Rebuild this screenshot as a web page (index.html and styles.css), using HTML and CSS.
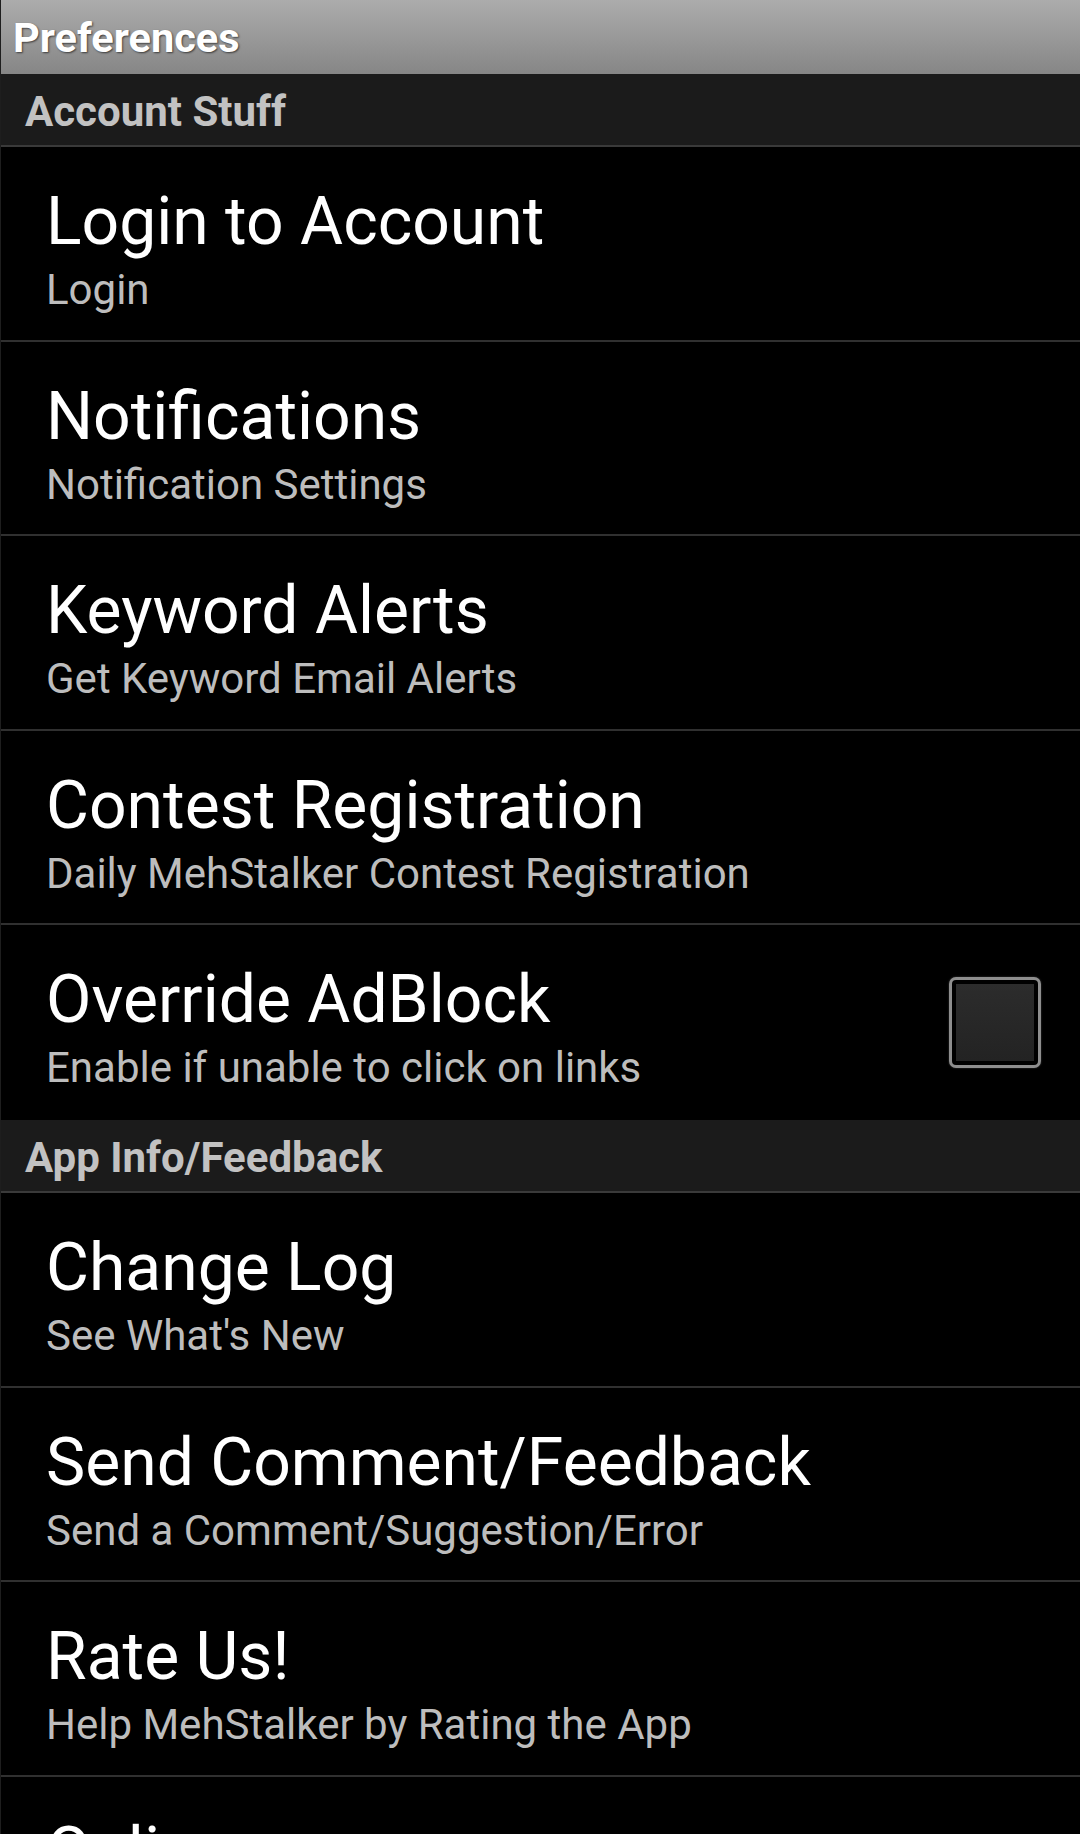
FILE: index.html
```html
<!DOCTYPE html>
<html lang="en">
<head>
    <meta charset="UTF-8">
    <meta name="viewport" content="width=device-width, initial-scale=1.0">
    <title>Preferences</title>
    <link rel="stylesheet" href="styles.css">
</head>
<body>
    <div class="titlebar">Preferences</div>

    <div class="category">Account Stuff</div>
    <div class="pref">
        <div class="pref-text">
            <div class="pref-title">Login to Account</div>
            <div class="pref-summary">Login</div>
        </div>
    </div>
    <div class="pref">
        <div class="pref-text">
            <div class="pref-title">Notifications</div>
            <div class="pref-summary">Notification Settings</div>
        </div>
    </div>
    <div class="pref">
        <div class="pref-text">
            <div class="pref-title">Keyword Alerts</div>
            <div class="pref-summary">Get Keyword Email Alerts</div>
        </div>
    </div>
    <div class="pref">
        <div class="pref-text">
            <div class="pref-title">Contest Registration</div>
            <div class="pref-summary">Daily MehStalker Contest Registration</div>
        </div>
    </div>
    <div class="pref last">
        <div class="pref-text">
            <div class="pref-title">Override AdBlock</div>
            <div class="pref-summary">Enable if unable to click on links</div>
        </div>
        <div class="checkbox"><span></span></div>
    </div>

    <div class="category">App Info/Feedback</div>
    <div class="pref">
        <div class="pref-text">
            <div class="pref-title">Change Log</div>
            <div class="pref-summary">See What's New</div>
        </div>
    </div>
    <div class="pref">
        <div class="pref-text">
            <div class="pref-title">Send Comment/Feedback</div>
            <div class="pref-summary">Send a Comment/Suggestion/Error</div>
        </div>
    </div>
    <div class="pref">
        <div class="pref-text">
            <div class="pref-title">Rate Us!</div>
            <div class="pref-summary">Help MehStalker by Rating the App</div>
        </div>
    </div>
    <div class="pref partial">
        <div class="pref-text">
            <div class="pref-title">Online</div>
        </div>
    </div>
</body>
</html>
```

FILE: styles.css
```css
body {
    margin: 0;
    background: #000;
    font-family: Roboto, 'Noto Sans', sans-serif;
    height: 1834px;
    overflow: hidden;
    border-left: 1px solid #1e1e1e;
}
.titlebar {
    height: 74px;
    box-sizing: border-box;
    padding: 2px 0 0 12px;
    line-height: 72px;
    font-size: 41.5px;
    font-weight: bold;
    color: #fff;
    text-shadow: 1px 1px 2px rgba(0, 0, 0, 0.6);
    background: linear-gradient(#acacac, #868686);
}
.category {
    height: 73px;
    box-sizing: border-box;
    padding: 4px 0 0 24px;
    line-height: 67px;
    font-size: 42px;
    font-weight: bold;
    color: #c2c2c2;
    background: #1b1b1b;
    border-bottom: 2px solid #3a3a3a;
}
.pref {
    display: flex;
    height: 194.6px;
    box-sizing: border-box;
    padding-left: 45px;
    border-bottom: 2px solid #303030;
}
.pref.last {
    border-bottom: none;
}
.pref.partial {
    height: 57px;
    overflow: hidden;
    border-bottom: none;
}
.pref-text {
    flex: 1;
    padding-top: 36px;
}
.pref-title {
    font-size: 66px;
    line-height: 78px;
    color: #fff;
}
.pref-summary {
    margin-top: 4px;
    font-size: 42px;
    line-height: 50px;
    color: #bdbdbd;
}
.checkbox {
    align-self: center;
    width: 92px;
    height: 91px;
    box-sizing: border-box;
    margin-right: 39px;
    border: 3px solid #8e8e8e;
    border-radius: 7px;
    padding: 4px;
    background: #000;
    box-shadow: 0 0 2px rgba(140, 140, 140, 0.5);
}
.checkbox span {
    display: block;
    height: 100%;
    background: linear-gradient(#2c2c2c, #232323);
}
```
